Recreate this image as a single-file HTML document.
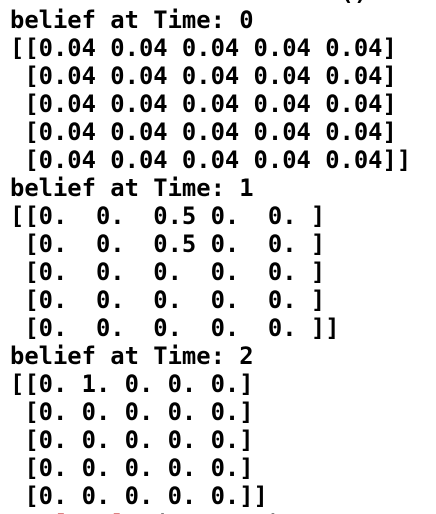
<!DOCTYPE html>
<html><head><meta charset="utf-8"><style>
html,body{margin:0;padding:0;background:#fff;width:436px;height:514px;overflow:hidden;position:relative}
pre{position:absolute;left:10px;top:-22px;margin:0;font-family:"DejaVu Sans Mono","Liberation Mono",monospace;font-weight:bold;font-size:23.8px;line-height:28px;color:#000}
.r{color:#b00}
</style></head><body>
<pre>        . . . .  . . . ()
belief at Time: 0
[[0.04 0.04 0.04 0.04 0.04]
 [0.04 0.04 0.04 0.04 0.04]
 [0.04 0.04 0.04 0.04 0.04]
 [0.04 0.04 0.04 0.04 0.04]
 [0.04 0.04 0.04 0.04 0.04]]
belief at Time: 1
[[0.  0.  0.5 0.  0. ]
 [0.  0.  0.5 0.  0. ]
 [0.  0.  0.  0.  0. ]
 [0.  0.  0.  0.  0. ]
 [0.  0.  0.  0.  0. ]]
belief at Time: 2
[[0. 1. 0. 0. 0.]
 [0. 0. 0. 0. 0.]
 [0. 0. 0. 0. 0.]
 [0. 0. 0. 0. 0.]
 [0. 0. 0. 0. 0.]]
   <span class="r">[000]</span>  (0. 0. 0)</pre>
</body></html>
